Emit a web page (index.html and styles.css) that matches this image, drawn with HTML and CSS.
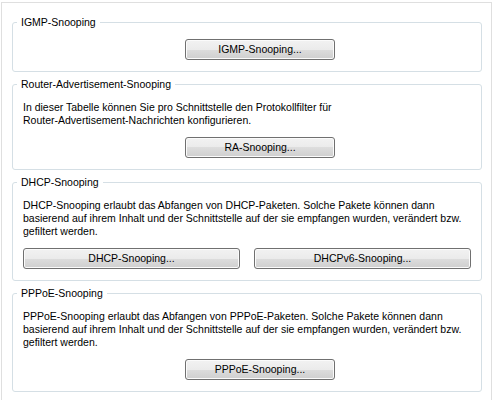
FILE: index.html
```html
<!DOCTYPE html>
<html lang="de">
<head>
  <meta charset="UTF-8" />
  <meta name="viewport" content="width=device-width, initial-scale=1.0"/>
  <title>Snooping</title>
  <link rel="stylesheet" href="styles.css">
</head>
<body>
  <div class="panel">
    <fieldset class="group">
      <legend>IGMP-Snooping</legend>
      <button class="btn single">IGMP-Snooping...</button>
    </fieldset>

    <fieldset class="group">
      <legend>Router-Advertisement-Snooping</legend>
      <p>In dieser Tabelle können Sie pro Schnittstelle den Protokollfilter für<br>Router-Advertisement-Nachrichten konfigurieren.</p>
      <button class="btn single">RA-Snooping...</button>
    </fieldset>

    <fieldset class="group">
      <legend>DHCP-Snooping</legend>
      <p>DHCP-Snooping erlaubt das Abfangen von DHCP-Paketen. Solche Pakete können dann<br>basierend auf ihrem Inhalt und der Schnittstelle auf der sie empfangen wurden, verändert bzw.<br>gefiltert werden.</p>
      <div class="btn-row">
        <button class="btn">DHCP-Snooping...</button>
        <button class="btn">DHCPv6-Snooping...</button>
      </div>
    </fieldset>

    <fieldset class="group">
      <legend>PPPoE-Snooping</legend>
      <p>PPPoE-Snooping erlaubt das Abfangen von PPPoE-Paketen. Solche Pakete können dann<br>basierend auf ihrem Inhalt und der Schnittstelle auf der sie empfangen wurden, verändert bzw.<br>gefiltert werden.</p>
      <button class="btn single">PPPoE-Snooping...</button>
    </fieldset>
  </div>
</body>
</html>
```

FILE: styles.css
```css
body {
  margin: 0;
  background: #fff;
  font-family: "Liberation Sans", Arial, sans-serif;
  font-size: 10.5px;
  line-height: 13px;
  color: #000;
}
.panel {
  margin: 2px 1px 0 1px;
  height: 400px;
  border: 1px solid #dfdfdf;
  border-bottom: none;
  padding: 13px 9px 0 10px;
  display: flex;
  flex-direction: column;
  gap: 6px;
}
.group {
  margin: 0;
  padding: 10px 10px 11px 10px;
  border: 1px solid #d5dfe5;
  border-radius: 3px;
  min-width: 0;
}
.group legend {
  margin-left: -6px;
  padding: 0 4px;
  line-height: 13px;
}
.group p {
  margin: 0 0 10px 0;
  white-space: nowrap;
}
.btn {
  display: block;
  height: 21px;
  padding: 0;
  font: inherit;
  color: #000;
  border: 1px solid #707070;
  border-radius: 3px;
  background: linear-gradient(#f2f2f2 0%, #ebebeb 50%, #dddddd 50%, #cfcfcf 100%);
  box-shadow: inset 0 0 0 1px #fbfbfb;
}
.single {
  width: 150px;
  margin-left: 162px;
}
.btn-row {
  display: grid;
  grid-template-columns: 1fr 1fr;
  gap: 14px;
}
```
